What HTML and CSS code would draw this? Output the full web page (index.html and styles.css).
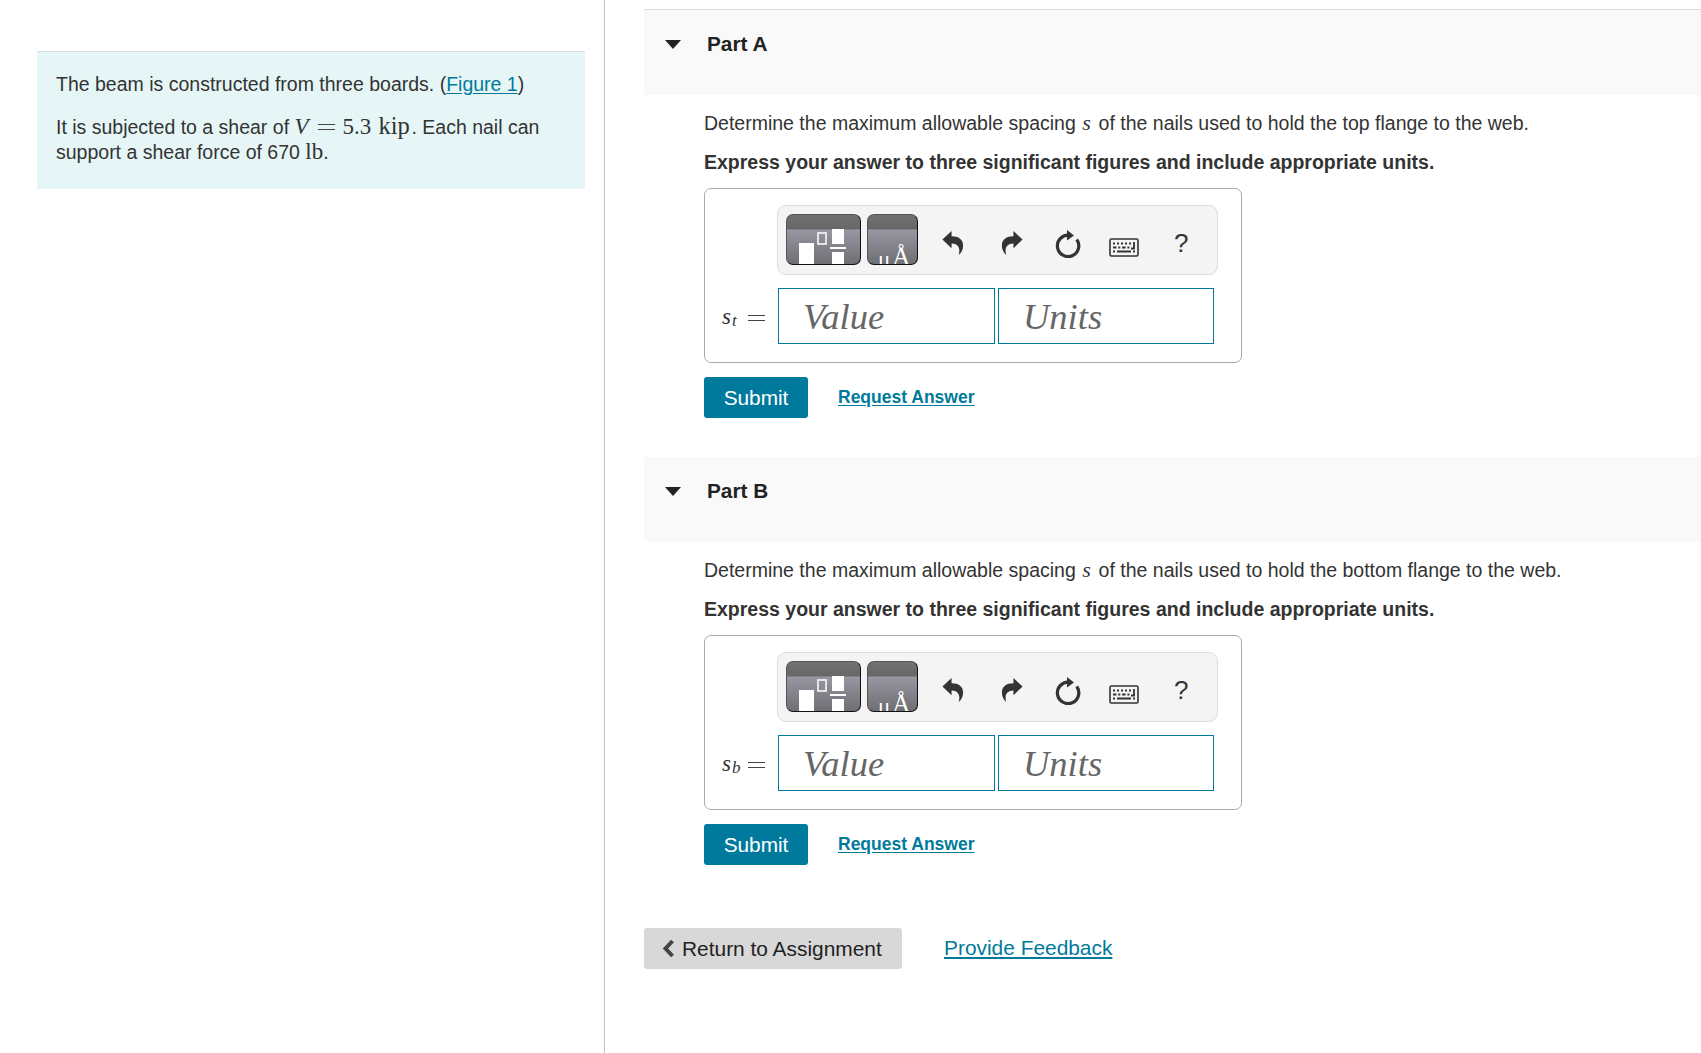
FILE: index.html
```
<!DOCTYPE html>
<html lang="en">
<head>
  <meta charset="UTF-8" />
  <meta name="viewport" content="width=device-width, initial-scale=1" />
  <title>Assignment</title>
  <link rel="stylesheet" href="styles.css">
</head>
<body>
  <!-- shared toolbar icons -->
  <svg class="sprite" width="0" height="0">
    <symbol id="undo" viewBox="0 0 22 26">
      <path d="M0 10 9.500 1v5.500C17 6.500 21.500 10 21.500 16c0 4-1.500 7-4.500 10C19 19 16.500 14 9.500 14v5z" fill="#333" />
    </symbol>
    <symbol id="reset" viewBox="0 0 26 28">
      <path d="M14 5.200A10.700 10.700 0 1 0 21.700 9.500" fill="none" stroke="#333" stroke-width="3.200" />
      <path d="M12 0 19 5.500 12 10.500z" fill="#333" />
    </symbol>
    <symbol id="keyboard" viewBox="0 0 30 19">
      <rect x="1" y="1" width="28" height="17" rx="1.500" fill="none" stroke="#333" stroke-width="1.600" />
      <path d="M4 5.500h20" stroke="#333" stroke-width="1.800" stroke-dasharray="2 2" />
      <path d="M4 9.500h18" stroke="#333" stroke-width="1.800" stroke-dasharray="3.500 1.800 2 1.800" />
      <path d="M25 4v6.500h-3M4 13.500h2M8 13.500h14M24 13.500h2" fill="none" stroke="#333" stroke-width="1.800" />
    </symbol>
    <symbol id="templates" viewBox="0 0 73 49">
      <path d="M12 28h15v21H12zM45 14h12v15H45zM45 37h12v12H45z" fill="#fff" />
      <path d="M43 33h16" stroke="#fff" stroke-width="2" />
      <rect x="31" y="18" width="8" height="11" fill="none" stroke="#eee" stroke-width="1.800" />
    </symbol>
  </svg>

  <div class="page">
    <aside class="sidebar">
      <div class="problem">
        <p>The beam is constructed from three boards. (<a href="#figure">Figure 1</a>)</p>
        <p>It is subjected to a shear of <span class="math equation"><i>V</i><span class="equals"></span><span class="number">5.3</span><span class="unit">kip</span></span>. Each nail can support a shear force of 670 <span class="math pound">lb</span>.</p>
      </div>
    </aside>

    <main>
      <section class="part part-first">
        <header><span class="caret"></span><h2>Part A</h2></header>
        <div class="part-body">
          <p>Determine the maximum allowable spacing <i class="math spacing">s</i> of the nails used to hold the top flange to the web.</p>
          <p class="instructions">Express your answer to three significant figures and include appropriate units.</p>
          <div class="answer">
            <div class="toolbar">
              <button class="dark templates"><svg><use href="#templates" /></svg></button>
              <button class="dark symbols"><span class="mu">μ</span><span class="angstrom">Å</span></button>
              <svg class="undo"><use href="#undo" /></svg>
              <svg class="redo"><use href="#undo" /></svg>
              <svg class="reset"><use href="#reset" /></svg>
              <svg class="keyboard"><use href="#keyboard" /></svg>
              <span class="help">?</span>
            </div>
            <div class="fields">
              <label><i>s</i><i class="sub">t</i><span class="equals"></span></label>
              <input type="text" placeholder="Value" />
              <input type="text" class="units" placeholder="Units" />
            </div>
          </div>
          <div class="actions">
            <button class="submit">Submit</button>
            <a href="#answer">Request Answer</a>
          </div>
        </div>
      </section>

      <section class="part">
        <header><span class="caret"></span><h2>Part B</h2></header>
        <div class="part-body">
          <p>Determine the maximum allowable spacing <i class="math spacing">s</i> of the nails used to hold the bottom flange to the web.</p>
          <p class="instructions">Express your answer to three significant figures and include appropriate units.</p>
          <div class="answer">
            <div class="toolbar">
              <button class="dark templates"><svg><use href="#templates" /></svg></button>
              <button class="dark symbols"><span class="mu">μ</span><span class="angstrom">Å</span></button>
              <svg class="undo"><use href="#undo" /></svg>
              <svg class="redo"><use href="#undo" /></svg>
              <svg class="reset"><use href="#reset" /></svg>
              <svg class="keyboard"><use href="#keyboard" /></svg>
              <span class="help">?</span>
            </div>
            <div class="fields">
              <label><i>s</i><i class="sub">b</i><span class="equals"></span></label>
              <input type="text" placeholder="Value" />
              <input type="text" class="units" placeholder="Units" />
            </div>
          </div>
          <div class="actions">
            <button class="submit">Submit</button>
            <a href="#answer">Request Answer</a>
          </div>
        </div>
      </section>

      <footer>
        <button class="return"><svg width="13" height="19" viewBox="0 0 13 19"><path d="M10.500 2 3.500 9.500l7 7.500" fill="none" stroke="#444" stroke-width="4" /></svg>Return to Assignment</button>
        <a href="#feedback">Provide Feedback</a>
      </footer>
    </main>
  </div>
</body>
</html>
```
FILE: styles.css
```
* {
  box-sizing: border-box;
}
body {
  margin: 0;
  font-family: "Liberation Sans", Arial, sans-serif;
  font-size: 19.5px;
  line-height: 25px;
  color: #333;
  background: #fff;
}
p {
  margin: 0;
}
a {
  color: #007a9c;
  text-underline-offset: 2px;
}
button {
  border: none;
  padding: 0;
  font-family: inherit;
  cursor: pointer;
}
.sprite {
  position: absolute;
}
.page {
  display: flex;
  height: 1053px;
  overflow: hidden;
}
.sidebar {
  width: 605px;
  flex: none;
  padding: 51px 19px 0 37px;
  border-right: 1px solid #b8c8d6;
}
.problem {
  height: 138px;
  padding: 20px 30px 0 19px;
  border-top: 1px solid #d5dfe2;
  background: #e6f6f7;
}
.problem p + p {
  margin-top: 18px;
}

/* math text */
.math {
  font-family: "Liberation Serif", serif;
  line-height: 0;
}
.equation {
  display: inline-flex;
  align-items: baseline;
  width: 117px;
  font-size: 23px;
  white-space: nowrap;
}
.equation i {
  width: 24px;
}
.equals {
  display: inline-block;
  width: 17px;
  height: 6px;
  border: solid #444;
  border-width: 1px 0;
}
.equation .equals {
  margin-bottom: 4px;
  transform: translateY(-4px);
}
.number {
  width: 36px;
  margin-left: 7px;
}
.unit {
  font-size: 24.5px;
}
.pound {
  font-size: 23px;
}
.spacing {
  display: inline-block;
  width: 11px;
  margin-left: 1px;
  font-size: 22px;
}

main {
  flex: 1;
  padding: 9px 0 0 39px;
}
.part header {
  display: flex;
  height: 85px;
  padding: 21px 0 0 21px;
  background: #f9f9f9;
}
.part-first header {
  height: 86px;
  border-top: 1px solid #ddd;
}
.caret {
  width: 16px;
  height: 9px;
  margin: 9px 26px 0 0;
  background: #222;
  clip-path: polygon(0 0, 100% 0, 50% 100%);
}
h2 {
  margin: 0;
  font-size: 20.8px;
  line-height: 25px;
  color: #222;
}
.part-body {
  padding: 16px 0 39px 60px;
}
.part-body .instructions {
  margin: 14px 0 13px;
  font-weight: bold;
}
.answer {
  width: 538px;
  height: 175px;
  padding: 16px 0 0 12px;
  border: 1px solid #aaa;
  border-radius: 7px;
}
.toolbar {
  display: flex;
  width: 441px;
  height: 70px;
  margin-left: 60px;
  padding: 8px;
  border: 1px solid #ddd;
  border-radius: 9px;
  background: #f4f4f4;
}
.dark {
  height: 51px;
  overflow: hidden;
  border: 1px solid #111;
  border-top-color: #555;
  border-left-color: #555;
  border-radius: 7px;
  color: #fff;
  background: linear-gradient(#707170, #666766 14px, #9897a2 15px, #6e6e73);
}
.templates {
  width: 75px;
  margin-right: 6px;
}
.templates svg {
  display: block;
  width: 73px;
  height: 49px;
}
.symbols {
  display: flex;
  width: 51px;
  padding: 24px 0 0 10px;
  font-family: "Liberation Serif", serif;
  line-height: 36px;
}
.mu {
  padding-top: 3px;
  font-size: 23px;
}
.angstrom {
  margin-left: 2px;
  font-size: 25px;
}
.undo, .redo {
  width: 22px;
  height: 25px;
}
.undo {
  margin: 16px 0 0 24px;
}
.redo {
  margin: 16px 0 0 37px;
  transform: scaleX(-1);
}
.reset {
  width: 26px;
  height: 28px;
  margin: 16px 0 0 32px;
}
.keyboard {
  width: 30px;
  height: 19px;
  margin: 24px 0 0 28px;
}
.help {
  margin: 17px 0 0 35px;
  font-size: 26px;
}
.fields {
  display: flex;
  margin-top: 13px;
}
label {
  display: flex;
  align-items: center;
  width: 61px;
  padding: 0 0 0 5px;
  font-family: "Liberation Serif", serif;
  font-size: 23px;
}
label .sub {
  width: 17px;
  padding-left: 1px;
  margin-top: 9px;
  font-size: 17px;
}
label .equals {
  margin-top: 4px;
}
input {
  width: 217px;
  height: 56px;
  margin-right: 3px;
  padding: 0 24px;
  border: 1px solid #007a9c;
  font: italic 36.5px "Liberation Serif", serif;
}
.units {
  width: 216px;
}
input::placeholder {
  color: #666;
}
.actions {
  display: flex;
  margin-top: 14px;
}
.submit {
  width: 104px;
  height: 41px;
  border-radius: 3px;
  font-size: 20.8px;
  color: #fff;
  background: #007a9c;
}
.actions a {
  margin: 8px 0 0 30px;
  font-size: 17.5px;
  font-weight: bold;
}
footer {
  display: flex;
  margin-top: 24px;
  font-size: 20.9px;
}
.return {
  display: flex;
  align-items: center;
  width: 258px;
  height: 41px;
  padding-left: 18px;
  border-radius: 3px;
  font-size: 20.9px;
  color: #222;
  background: #d8d8d8;
}
.return svg {
  margin-right: 7px;
}
footer a {
  margin: 7px 0 0 42px;
  text-decoration-thickness: 2px;
}
```
